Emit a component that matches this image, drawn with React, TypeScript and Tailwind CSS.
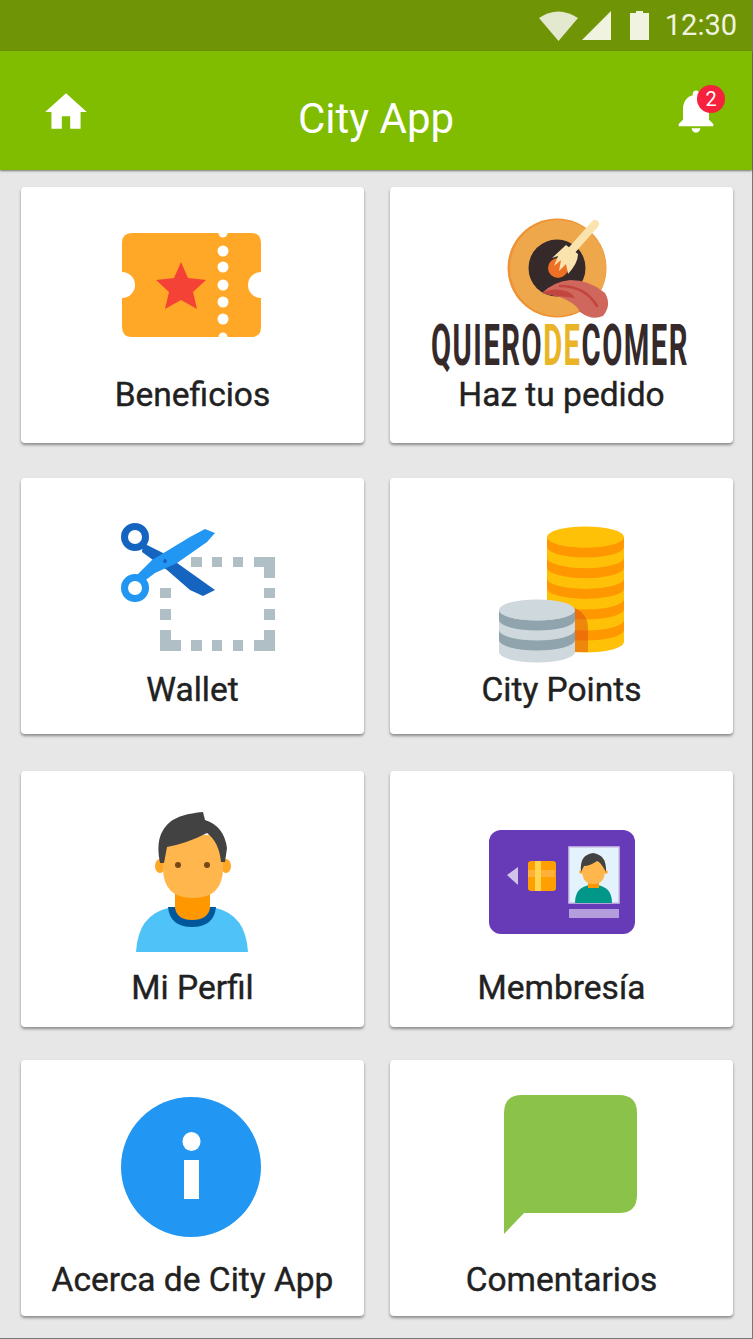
import React from 'react';

const Art: React.FC<{ x: number; y: number; children: React.ReactNode }> = ({ x, y, children }) => (
  <svg className="block h-[187px] w-full shrink-0" viewBox={`${x} ${y} 343 187`}>
    {children}
  </svg>
);

const Ticket = () => (
  <Art x={21} y={187}>
    <path
      d="M132 233H251Q261 233 261 243V272A13 13 0 0 0 261 298V327Q261 337 251 337H132Q122 337 122 327V298A13 13 0 0 0 122 272V243Q122 233 132 233Z"
      fill="#ffa726"
    />
    {[233, 251, 267, 285, 302, 319, 337].map((cy) => (
      <circle key={cy} cx={223} cy={cy} r={cy === 233 || cy === 337 ? 4.5 : 5.5} fill="#fff" />
    ))}
    <polygon points="181,262 188,278 206,280 193,292 197,309 181,300 165,309 169,292 156,280 174,278" fill="#f44336" />
  </Art>
);

const LogoArt = () => (
  <>
    <Art x={390} y={187}>
      <circle cx={557} cy={268} r={49.5} fill="#ee9233" />
      <circle cx={558} cy={268} r={48} fill="#eea74a" />
      <circle cx={557} cy={268} r={28.5} fill="#35292a" />
      <circle cx={558} cy={268} r={10} fill="#ee6f26" />
      <path d="M595 224L572 250" stroke="#fbe3ad" strokeWidth={8} strokeLinecap="round" />
      <path d="M566 245L552 258L558 256L554 266L561 260L559 271L566 264L568 274Q578 263 578 254Z" fill="#fbe3ad" />
      <path
        d="M542 293Q553 282 570 280Q590 280 605 293Q612 305 603 316Q592 321 580 312Q576 303 560 297Q550 295 542 293Z"
        fill="#d0675c"
      />
      <path d="M542 293Q552 287 566 291Q572 293 575 298Q566 297 558 296Q550 295 542 293Z" fill="#c2453f" />
      <path d="M560 286Q585 286 597 306" stroke="#c2453f" strokeWidth={2.5} fill="none" strokeLinecap="round" />
    </Art>
    <span className="absolute top-[129px] left-[41px] origin-left scale-x-[0.503] text-[58px] leading-none font-bold tracking-[3px] whitespace-nowrap text-[#35292a]">
      QUIERO<span className="text-[#e9b425]">DE</span>COMER
    </span>
  </>
);

const Scissors = () => (
  <Art x={21} y={478}>
    <path d="M191 557H202V567H191ZM212 557H222V567H212ZM233 557H243V567H233ZM254 557H275V578H264V567H254ZM160 588H171V598H160ZM160 609H171V620H160ZM264 588H275V598H264ZM264 609H275V620H264ZM160 630H171V640H181V651H160ZM191 640H202V651H191ZM212 640H222V651H212ZM233 640H243V651H233ZM264 630H275V651H254V640H264Z" fill="#b0bec5" />
    <circle cx={135} cy={537} r={10.5} fill="none" stroke="#1565c0" strokeWidth={7} />
    <path d="M143 543L163 553L215 590L203 596L190 590L167 570L153 560L142 552Z" fill="#1565c0" />
    <circle cx={135} cy={588} r={10.5} fill="none" stroke="#2196f3" strokeWidth={7} />
    <path d="M137 575L152 560L190 537L205 529L215 533L207 542L177 563L155 573L143 582Z" fill="#2196f3" />
    <circle cx={165} cy={561} r={2} fill="#1565c0" />
  </Art>
);

const Coins = () => (
  <Art x={390} y={478}>
    <path d="M547 537H624V642A38.500 10.500 0 0 1 547 642Z" fill="#ffc107" />
    {[0, 20.7, 41.4, 62, 83].map((d) => (
      <path
        key={d}
        d={`M547 ${537 + d}A38.500 10.500 0 0 0 624 ${537 + d}V${547 + d}A38.500 10.500 0 0 1 547 ${547 + d}Z`}
        fill="#ff9800"
      />
    ))}
    <ellipse cx={585.5} cy={537} rx={38.5} ry={10.5} fill="#ffc107" />
    <path d="M570 606Q588 612 588 628V652H572Z" fill="#d84315" opacity={0.45} />
    <path d="M499 610H575V652A38 10.500 0 0 1 499 652Z" fill="#cfd8dc" />
    {[0, 20].map((d) => (
      <path
        key={d}
        d={`M499 ${610 + d}A38 10.500 0 0 0 575 ${610 + d}V${620 + d}A38 10.500 0 0 1 499 ${620 + d}Z`}
        fill="#90a4ae"
      />
    ))}
    <ellipse cx={537} cy={610} rx={38} ry={10.5} fill="#cfd8dc" />
  </Art>
);

const Person = () => (
  <Art x={21} y={771}>
    <path d="M136 952Q138 915 168 908L216 908Q246 915 248 952Z" fill="#4fc3f7" />
    <path d="M168 907H216Q214 927 192 927Q170 927 168 907Z" fill="#01579b" />
    <path d="M175 892H210V908Q208 920 192 920Q177 920 175 908Z" fill="#ff9800" />
    <ellipse cx={160} cy={866} rx={5} ry={7} fill="#ffa726" />
    <ellipse cx={226} cy={866} rx={5} ry={7} fill="#ffa726" />
    <path d="M163 835H223V868Q223 898 193 898Q163 898 163 868Z" fill="#ffb74d" />
    <path d="M160 863Q154 835 170 822Q180 814 203 812L205 820Q224 826 227 848L225 862L221 862Q219 842 207 833Q188 843 167 847L164 863Z" fill="#424242" />
    <circle cx={178} cy={865} r={3} fill="#784719" />
    <circle cx={207} cy={865} r={3} fill="#784719" />
  </Art>
);

const Membership = () => (
  <Art x={390} y={771}>
    <rect x={489} y={830} width={146} height={104} rx={12} fill="#673ab7" />
    <polygon points="507,875 518,867 518,885" fill="#d1c4e9" />
    <rect x={528} y={861} width={28} height={30} rx={3} fill="#ffa000" />
    <rect x={528} y={870} width={27} height={7} fill="#ffb74d" opacity={0.7} />
    <rect x={535} y={861} width={6} height={30} fill="#ffd54f" />
    <rect x={569} y={847} width={50} height={56} fill="#e3f2fd" stroke="#d1c4e9" strokeWidth={1.5} />
    <path d="M575 903Q575 887 590 885H597Q612 887 612 903Z" fill="#009688" />
    <rect x={588} y={878} width={11} height={10} fill="#ff9800" />
    <circle cx={581} cy={872} r={1.8} fill="#ffa726" />
    <circle cx={606} cy={872} r={1.8} fill="#ffa726" />
    <path d="M582 860H605V870Q605 884 593.500 884Q582 884 582 870Z" fill="#ffb74d" />
    <path d="M581 872Q579 855 593 853Q607 855 606 872L603 867Q600 862 597 861Q590 866 584 866Z" fill="#424242" />
    <rect x={569} y={909} width={50} height={9} fill="#b39ddb" />
  </Art>
);

const Info = () => (
  <Art x={21} y={1060}>
    <circle cx={191} cy={1167} r={70} fill="#2196f3" />
    <ellipse cx={191.5} cy={1141.5} rx={9} ry={9.5} fill="#fff" />
    <rect x={184} y={1160} width={15} height={39} fill="#fff" />
  </Art>
);

const Comment = () => (
  <Art x={390} y={1060}>
    <path d="M522 1095H619Q637 1095 637 1113V1195Q637 1213 619 1213H524L504 1234V1113Q504 1095 522 1095Z" fill="#8bc34a" />
  </Art>
);

const tiles = [
  { label: 'Beneficios', art: <Ticket />, labelClass: 'mt-px' },
  { label: 'Haz tu pedido', art: <LogoArt />, labelClass: 'mt-px' },
  { label: 'Wallet', art: <Scissors />, labelClass: 'mt-[5px]' },
  { label: 'City Points', art: <Coins />, labelClass: 'mt-[5px]' },
  { label: 'Mi Perfil', art: <Person />, labelClass: 'mt-[10px]' },
  { label: 'Membresía', art: <Membership />, labelClass: 'mt-[10px]' },
  { label: 'Acerca de City App', art: <Info />, labelClass: 'mt-[13px]' },
  { label: 'Comentarios', art: <Comment />, labelClass: 'mt-[13px]' },
];

const App: React.FC = () => {
  return (
    <div className="flex h-[1339px] w-[753px] flex-col border-r border-b border-[#777777] bg-[#e7e7e7] font-['Roboto',sans-serif]">
      {/* status bar */}
      <div className="flex h-[51px] shrink-0 items-center justify-end bg-[#6f9406] pr-[15px] text-[#eff3df]">
        <svg className="h-[30px] w-[39px]" viewBox="0 0 39 30">
          <path d="M0 7Q19 -6 39 7L19.500 30Z" fill="#e3e9cf" />
        </svg>
        <svg className="ml-[4px] h-[30px] w-[29px]" viewBox="0 0 29 30">
          <polygon points="29,0 29,29 0,29" fill="#eff3df" />
        </svg>
        <svg className="ml-[19px] h-[30px] w-[19px]" viewBox="0 0 19 30">
          <path d="M6 0H13V2H19V29H0V2H6Z" fill="#eff3df" />
        </svg>
        <span className="ml-[16px] text-[29px] leading-none">12:30</span>
      </div>

      {/* app bar */}
      <header className="z-10 grid h-[119px] shrink-0 grid-cols-[1fr_auto_1fr] items-center bg-[#80bc00] px-[30px] text-white shadow-[0_1px_2px_rgba(0,0,0,0.5)]">
        <svg className="mt-[3px] ml-[11px] h-[50px] w-[50px] justify-self-start" viewBox="0 0 24 24" fill="currentColor">
          <path d="M10 20v-6h4v6h5v-8h3L12 3 2 12h3v8z" />
        </svg>
        <h1 className="pt-[17px] text-[42px] leading-none font-normal">City App</h1>
        <div className="relative justify-self-end">
          <svg className="h-[52px] w-[52px]" viewBox="0 0 24 24" fill="currentColor">
            <path d="M12 22c1.100 0 2-.9 2-2h-4c0 1.100.89 2 2 2zm6-6v-5c0-3.070-1.640-5.640-4.500-6.320V4c0-.83-.67-1.500-1.500-1.500s-1.500.67-1.500 1.500v.68C7.630 5.360 6 7.920 6 11v5l-2 2v1h16v-1l-2-2z" />
          </svg>
          <span className="absolute top-0 right-[-3px] flex h-[28px] w-[28px] items-center justify-center rounded-full bg-[#f5213d] text-[20px] leading-none">
            2
          </span>
        </div>
      </header>

      {/* menu grid */}
      <main className="grid grid-cols-[343px_343px] grid-rows-[291px_293px_289px_256px] gap-x-[26px] pt-[17px] pl-[21px]">
        {tiles.map((tile) => (
          <div
            key={tile.label}
            className="relative flex h-[256px] flex-col items-center rounded-[4px] bg-white shadow-[0_2px_3px_rgba(0,0,0,0.4)]"
          >
            {tile.art}
            <span className={`text-[33.500px] leading-[40px] font-normal text-[#212121] [-webkit-text-stroke:0.4px_#212121] ${tile.labelClass}`}>
              {tile.label}
            </span>
          </div>
        ))}
      </main>
    </div>
  );
};

export default App;
